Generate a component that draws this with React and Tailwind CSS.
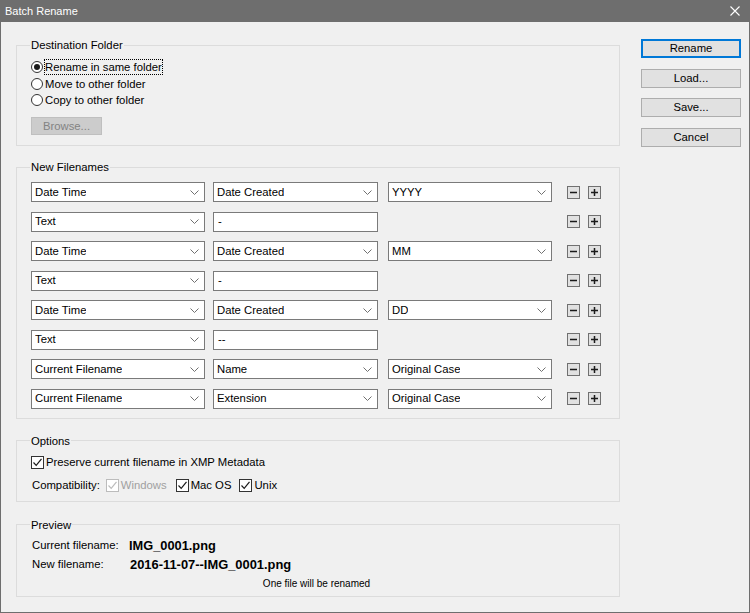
import React from 'react'

// ── Small Win32-style controls ─────────────────────────────────────────────
function Chevron() {
  return (
    <svg width="9" height="5" viewBox="0 0 9 5" className="shrink-0">
      <polyline points="0.5,0.5 4.5,4.5 8.5,0.5" fill="none" stroke="#707070" strokeWidth="1" />
    </svg>
  )
}

function Select({ w, value }) {
  return (
    <div className={`${w} h-[20px] border border-[#7a7a7a] bg-white flex items-center justify-between pl-[3px] pr-[5px] shrink-0`}>
      <span className="truncate">{value}</span>
      <Chevron />
    </div>
  )
}

function TextField({ value }) {
  return (
    <div className="w-[165px] h-[20px] border border-[#7a7a7a] bg-white flex items-center pl-[4px] shrink-0">
      {value}
    </div>
  )
}

function SmallBtn({ plus }) {
  return (
    <div className="w-[13px] h-[13px] border border-[#707070] bg-[#e1e1e1] flex items-center justify-center shrink-0">
      <svg width="9" height="9" viewBox="0 0 9 9">
        <rect x="1" y="3.75" width="7" height="1.5" fill="#1a1a1a" />
        {plus && <rect x="3.75" y="1" width="1.5" height="7" fill="#1a1a1a" />}
      </svg>
    </div>
  )
}

function Radio({ checked, label, focused }) {
  return (
    <div className="h-[16.5px] flex items-center gap-[2px]">
      <div className="w-[12px] h-[12px] rounded-full border border-[#333333] bg-white flex items-center justify-center shrink-0">
        {checked && <div className="w-[6px] h-[6px] rounded-full bg-[#1a1a1a]" />}
      </div>
      <span className={focused ? 'outline-1 outline-dotted outline-black leading-[14px]' : 'leading-[14px]'}>{label}</span>
    </div>
  )
}

function Checkbox({ label, disabled }) {
  return (
    <div className="flex items-center gap-[2px]">
      <div className={`w-[13px] h-[13px] border bg-white flex items-center justify-center shrink-0 ${disabled ? 'border-[#bcbcbc]' : 'border-[#333333]'}`}>
        <svg width="11" height="11" viewBox="0 0 11 11">
          <polyline points="1.5,5.5 4.2,8.3 9.5,1.8" fill="none" stroke={disabled ? '#bcbcbc' : '#1a1a1a'} strokeWidth="1.2" />
        </svg>
      </div>
      <span className={disabled ? 'text-[#a0a0a0]' : ''}>{label}</span>
    </div>
  )
}

function Group({ title, className, children }) {
  return (
    <fieldset className={`w-[604px] border border-[#dcdcdc] px-[14px] ${className}`}>
      <legend className="leading-[16px] px-[1px] -ml-[1px]">{title}</legend>
      {children}
    </fieldset>
  )
}

function DlgButton({ label, primary }) {
  return (
    <div
      className={`w-[100px] h-[19px] bg-[#e1e1e1] flex items-center justify-center ${
        primary ? 'border-2 border-[#0078d7]' : 'border border-[#adadad]'
      }`}
    >
      {label}
    </div>
  )
}

const rows = [
  { a: 'Date Time', b: 'Date Created', c: 'YYYY' },
  { a: 'Text', text: '-' },
  { a: 'Date Time', b: 'Date Created', c: 'MM' },
  { a: 'Text', text: '-' },
  { a: 'Date Time', b: 'Date Created', c: 'DD' },
  { a: 'Text', text: '--' },
  { a: 'Current Filename', b: 'Name', c: 'Original Case' },
  { a: 'Current Filename', b: 'Extension', c: 'Original Case' },
]

export default function App() {
  return (
    <div className="w-[750px] h-[613px] bg-[#6e6e6e] px-px pb-px flex flex-col font-['Liberation_Sans',Arial,sans-serif] text-[11.3px] text-black">
      {/* Title bar */}
      <div className="h-[22px] flex items-center justify-between pl-[4px] pr-[9px] text-white text-[11px] shrink-0">
        <span>Batch Rename</span>
        <svg width="10" height="10" viewBox="0 0 10 10">
          <path d="M0.5 0.5 L9.5 9.5 M9.5 0.5 L0.5 9.5" stroke="#ffffff" strokeWidth="1.1" />
        </svg>
      </div>

      {/* Body */}
      <div className="flex-1 bg-[#f0f0f0] flex pl-[15px] pt-[15px]">
        <div className="flex flex-col">
          {/* Destination Folder */}
          <Group title="Destination Folder" className="pt-[6px] pb-[10px]">
            <div className="flex flex-col">
              <Radio checked focused label="Rename in same folder" />
              <Radio label="Move to other folder" />
              <Radio label="Copy to other folder" />
            </div>
            <div className="mt-[8.5px] w-[71px] h-[18px] bg-[#cccccc] border border-[#bfbfbf] text-[#838383] flex items-center justify-center">
              Browse...
            </div>
          </Group>

          {/* New Filenames */}
          <Group title="New Filenames" className="mt-[13px] pt-[7px] pb-[9px]">
            <div className="flex flex-col gap-[9.5px]">
              {rows.map((r, i) => (
                <div key={i} className="flex items-center">
                  <Select w="w-[174px]" value={r.a} />
                  <div className="ml-[8px]">
                    {r.text !== undefined ? <TextField value={r.text} /> : <Select w="w-[165px]" value={r.b} />}
                  </div>
                  <div className="ml-[10px] w-[164px]">
                    {r.c && <Select w="w-[164px]" value={r.c} />}
                  </div>
                  <div className="ml-[15px] flex items-center gap-[8px]">
                    <SmallBtn />
                    <SmallBtn plus />
                  </div>
                </div>
              ))}
            </div>
          </Group>

          {/* Options */}
          <Group title="Options" className="mt-[14px] pt-[6px] pb-[7px]">
            <div className="flex flex-col gap-[7px]">
              <div className="h-[16px] flex items-center">
                <Checkbox label="Preserve current filename in XMP Metadata" />
              </div>
              <div className="h-[16px] flex items-center">
                <span className="ml-[1px] mr-[6px]">Compatibility:</span>
                <Checkbox disabled label="Windows" />
                <div className="ml-[9px]">
                  <Checkbox label="Mac OS" />
                </div>
                <div className="ml-[8px]">
                  <Checkbox label="Unix" />
                </div>
              </div>
            </div>
          </Group>

          {/* Preview */}
          <Group title="Preview" className="mt-[15px] pt-[5px] pb-[4px]">
            <div className="flex flex-col gap-[3px]">
              <div className="h-[16px] flex items-center pl-[1px]">
                <span className="w-[97px]">Current filename:</span>
                <span className="font-bold text-[12.8px]">IMG_0001.png</span>
              </div>
              <div className="h-[16px] flex items-center pl-[1px]">
                <span className="w-[98px]">New filename:</span>
                <span className="font-bold text-[12.9px]">2016-11-07--IMG_0001.png</span>
              </div>
              <div className="h-[16px] flex items-center justify-center text-[10px] pr-[3px]">
                One file will be renamed
              </div>
            </div>
          </Group>
        </div>

        {/* Right buttons */}
        <div className="ml-[21px] pt-[2px] flex flex-col gap-[10.5px]">
          <DlgButton primary label="Rename" />
          <DlgButton label="Load..." />
          <DlgButton label="Save..." />
          <DlgButton label="Cancel" />
        </div>
      </div>
    </div>
  )
}
